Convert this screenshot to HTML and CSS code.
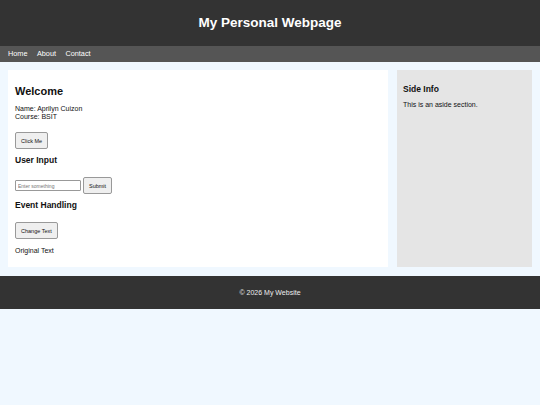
FILE: index.html
```html
<!DOCTYPE html>
<html lang="en">
<head>
  <meta charset="UTF-8" />
  <meta name="viewport" content="width=device-width, initial-scale=1.0" />
  <title>My Personal Webpage</title>
  <link rel="stylesheet" href="styles.css">
</head>
<body>
  <header>My Personal Webpage</header>
  <nav>
    <a href="#">Home</a>
    <a href="#">About</a>
    <a href="#">Contact</a>
  </nav>

  <main class="container">
    <section class="content">
      <h2>Welcome</h2>
      <p>Name: Aprilyn Cuizon<br>Course: BSIT</p>
      <button onclick="alert('Hello!')">Click Me</button>

      <h3>User Input</h3>
      <div class="input-row">
        <input type="text" id="userInput" placeholder="Enter something">
        <button onclick="showInput()">Submit</button>
      </div>

      <h3>Event Handling</h3>
      <button onclick="changeText()">Change Text</button>
      <p id="text" class="output">Original Text</p>
    </section>

    <aside class="side">
      <h3>Side Info</h3>
      <p>This is an aside section.</p>
    </aside>
  </main>

  <footer>&copy; 2026 My Website</footer>

  <script>
    function showInput() {
      let val = document.getElementById("userInput").value;
      alert("You entered: " + val);
    }

    function changeText() {
      document.getElementById("text").innerHTML = "Text Changed!";
    }
  </script>
</body>
</html>
```

FILE: styles.css
```css
body {
  font-family: "Liberation Sans", Arial, sans-serif;
  font-size: 7px;
  margin: 0;
  padding: 0;
  background: aliceblue;
  color: #111;
}
header {
  background: #333;
  color: white;
  height: 46px;
  line-height: 46px;
  text-align: center;
  font-size: 13.5px;
  font-weight: bold;
}
nav {
  background: #555;
  height: 16px;
  line-height: 16px;
  padding: 0 8px;
}
nav a {
  color: white;
  text-decoration: none;
  font-size: 7.3px;
  margin-right: 7.5px;
}
.container {
  display: flex;
  gap: 9px;
  padding: 8px;
}
.content {
  flex: 1;
  background: white;
  padding: 7px 7px 12px;
}
.side {
  width: 123px;
  background: #e5e5e5;
  padding: 7px 6px;
}
h2 {
  font-size: 11px;
  line-height: 13px;
  margin: 8px 0 7px;
}
h3 {
  font-size: 8.5px;
  line-height: 10px;
  margin: 6px 0 12px;
}
p {
  line-height: 8px;
  margin: 0 0 11px;
}
.side h3 {
  margin: 7px 0 7px;
}
button {
  font-family: "Liberation Sans", Arial, sans-serif;
  font-size: 5.5px;
  height: 17px;
  padding: 0 5px;
  background: #efefef;
  border: 1px solid #999;
  border-radius: 2px;
  color: #111;
}
.input-row {
  display: flex;
  align-items: center;
  gap: 2px;
}
input {
  font-family: "Liberation Sans", Arial, sans-serif;
  font-size: 5px;
  width: 60px;
  height: 9px;
  padding: 0 2px;
  border: 1px solid #999;
  border-radius: 1px;
}
.output {
  margin: 8px 0 0;
}
footer {
  background: #333;
  color: #eee;
  height: 33px;
  line-height: 33px;
  text-align: center;
  margin-top: 1px;
}
```
